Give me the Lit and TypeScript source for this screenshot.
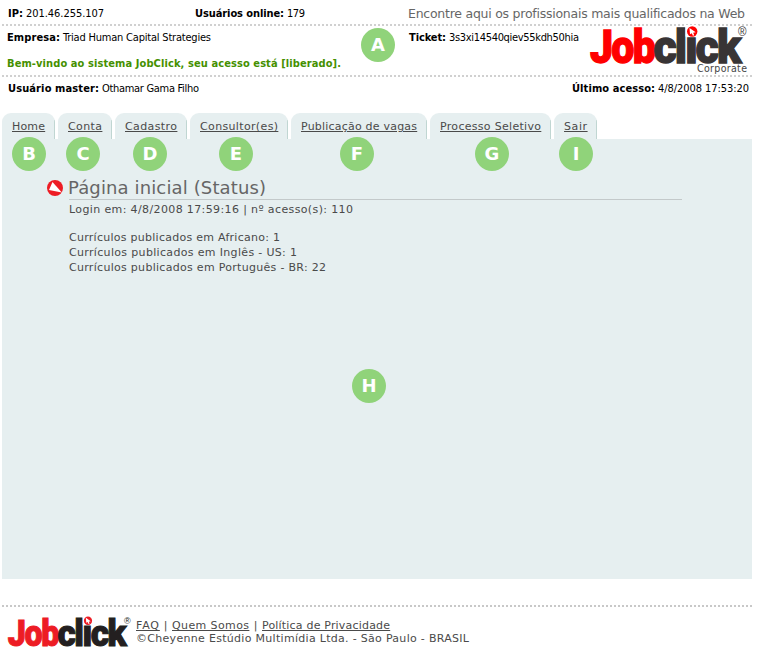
import { LitElement, html, css, svg } from "lit";
import { customElement, property } from "lit/decorators.js";

/** One line of text whose tracking is adjusted so that it spans `w` pixels. */
@customElement("fit-text")
class FitText extends LitElement {
  @property({ type: Number }) w = 0;
  static styles = css`
    :host { display: inline-block; white-space: nowrap; vertical-align: top; }
  `;
  render() {
    return html`<slot></slot>`;
  }
  firstUpdated() {
    const n = (this.textContent ?? "").length;
    const natural = this.getBoundingClientRect().width;
    const gap = (this.w - natural) / Math.max(1, n - 1);
    this.style.letterSpacing = `${gap}px`;
    this.style.marginRight = `${-gap}px`;
  }
}

@customElement("job-logo")
class JobLogo extends LitElement {
  @property() first = "#ff0000";
  @property() second = "#383435";
  static styles = css`
    :host { display: block; }
    svg { display: block; width: 100%; height: 100%; overflow: visible; }
    .word { font: 900 46px Roboto, sans-serif; letter-spacing: -2px; stroke-width: 1.3; }
    .reg { font: 12px "Liberation Sans", sans-serif; }
  `;
  render() {
    return html`<svg viewBox="0 0 158 38" preserveAspectRatio="none">
      ${svg`
        <text class="word" x="1" y="36" textLength="64" lengthAdjust="spacingAndGlyphs" fill=${this.first} stroke=${this.first}>Job</text>
        <text class="word" x="64.5" y="36" textLength="86" lengthAdjust="spacingAndGlyphs" fill=${this.second} stroke=${this.second}>click</text>
        <rect x="96.5" y="-2" width="13" height="11.6" fill="#fff"/>
        <circle cx="103.2" cy="4.5" r="5.2" fill=${this.first}/>
        <path d="M100.5 1 L106.7 5.2 L104.2 5.7 L105.2 8.2 L103.9 8.7 L102.8 6.2 L101 7.2Z" fill="#fff"/>
        <text class="reg" x="149" y="9" textLength="8.5" lengthAdjust="spacingAndGlyphs" fill=${this.second}>®</text>
      `}
    </svg>`;
  }
}

const tabs: [string, number][] = [
  ["Home", 33],
  ["Conta", 34],
  ["Cadastro", 52],
  ["Consultor(es)", 78],
  ["Publicação de vagas", 116],
  ["Processo Seletivo", 101],
  ["Sair", 23],
];

const marks: [string, number, number][] = [
  ["A", 378, 45],
  ["B", 29, 154],
  ["C", 83, 154],
  ["D", 150, 154],
  ["E", 236, 154],
  ["F", 357, 154],
  ["G", 492, 154],
  ["I", 576, 154],
  ["H", 369, 386],
];

@customElement("app-root")
class AppRoot extends LitElement {
  static styles = css`
    :host {
      display: block;
      position: relative;
      width: 760px;
      height: 656px;
      overflow: hidden;
      background: #fff;
      color: #4a4a4a;
      font: 11px/14px "DejaVu Sans", Verdana, sans-serif;
    }
    .page { width: 750px; margin-left: 2px; }
    .info {
      color: #000;
      font-family: "DejaVu Sans Condensed", "DejaVu Sans", Tahoma, sans-serif;
      font-stretch: condensed;
    }
    .row { display: flex; box-sizing: border-box; }
    .pair { display: flex; gap: 3px; }
    .dots {
      height: 2px;
      background: repeating-linear-gradient(90deg, #d0d0d0 0 2px, transparent 2px 4px);
    }
    .top { height: 24px; padding: 7px 7px 0 6px; }
    .online { margin-left: 91px; }
    .slogan {
      margin-left: auto;
      color: #666;
      font: 12.5px/14px "DejaVu Sans", Verdana, sans-serif;
    }
    .company { height: 49px; padding: 5px 5px 0 5px; }
    .who { width: 402px; }
    .welcome { margin-top: 12px; color: #459000; font-weight: bold; }
    .brand { margin-left: auto; width: 158px; margin-top: -4px; }
    .brand job-logo { width: 158px; height: 38px; }
    .corp {
      display: flex;
      justify-content: flex-end;
      margin-top: -3px;
      line-height: 12px;
      color: #444;
      font-family: "DejaVu Sans", Verdana, sans-serif;
      font-size: 10.5px;
    }
    .master { height: 36px; padding: 5px 3px 0 6px; justify-content: space-between; }
    .tabs { display: flex; gap: 3px; height: 26px; }
    .tab {
      box-sizing: border-box;
      padding: 7px 10px 0;
      background: linear-gradient(#c0d6d2, #c0d6d2) right 7px / 1px 100% no-repeat #e6eff0;
      border-radius: 9px 9px 0 0;
    }
    .link { text-decoration: underline; text-underline-offset: 1px; text-decoration-thickness: 1px; }
    .panel { box-sizing: border-box; height: 440px; padding: 38px 70px 0 45px; background: #e6eff0; }
    .head { display: flex; align-items: center; height: 22px; }
    .head svg { width: 16px; height: 16px; margin-right: 5px; }
    .title { font-size: 18px; line-height: 22px; color: #666; }
    .body { margin-left: 22px; border-top: 1px solid #c3c9ca; padding-top: 3px; }
    .list { margin-top: 13px; line-height: 15px; }
    .foot { margin-top: 26px; }
    .foot .dots { background: repeating-linear-gradient(90deg, #c8c8c8 0 2px, transparent 2px 4px); }
    .legal { display: flex; padding: 10px 0 0 5px; }
    .legal job-logo { width: 124px; height: 31px; margin-right: 5px; }
    .lines { line-height: 13px; padding-top: 2px; }
    .links { display: flex; }
    .sep { width: 13px; text-align: center; }
    .mark {
      position: absolute;
      width: 34px;
      height: 34px;
      border-radius: 50%;
      background: #90d37a;
      color: #fff;
      font: bold 18px/34px "DejaVu Sans", Verdana, sans-serif;
      text-align: center;
    }
  `;

  render() {
    return html`
      <div class="page">
        <div class="info">
          <div class="row top">
            <div class="pair"><b><fit-text w="15">IP:</fit-text></b><fit-text w="78">201.46.255.107</fit-text></div>
            <div class="pair online"><b><fit-text w="89">Usuários online:</fit-text></b><fit-text w="18">179</fit-text></div>
            <div class="slogan"><fit-text w="337">Encontre aqui os profissionais mais qualificados na Web</fit-text></div>
          </div>
          <div class="dots"></div>
          <div class="row company">
            <div class="who">
              <div class="pair"><b><fit-text w="53">Empresa:</fit-text></b><fit-text w="148">Triad Human Capital Strategies</fit-text></div>
              <div class="welcome"><fit-text w="334">Bem-vindo ao sistema JobClick, seu acesso está [liberado].</fit-text></div>
            </div>
            <div class="pair"><b><fit-text w="37">Ticket:</fit-text></b><fit-text w="130">3s3xi14540qiev55kdh50hia</fit-text></div>
            <div class="brand">
              <job-logo></job-logo>
              <div class="corp"><fit-text w="50">Corporate</fit-text></div>
            </div>
          </div>
          <div class="dots"></div>
          <div class="row master">
            <div class="pair"><b><fit-text w="91">Usuário master:</fit-text></b><fit-text w="97">Othamar Gama Filho</fit-text></div>
            <div class="pair"><b><fit-text w="83">Último acesso:</fit-text></b><fit-text w="91">4/8/2008 17:53:20</fit-text></div>
          </div>
        </div>
        <div class="tabs">
          ${tabs.map(([t, w]) => html`<div class="tab"><fit-text class="link" w=${w}>${t}</fit-text></div>`)}
        </div>
        <div class="panel">
          <div class="head">
            <svg viewBox="0 0 16 16">
              <circle cx="8" cy="8" r="8" fill="#ed1c24" />
              <path d="M5.5 2 L14.8 12.5 L2 10Z" fill="#fff" />
            </svg>
            <div class="title"><fit-text w="198">Página inicial (Status)</fit-text></div>
          </div>
          <div class="body">
            <fit-text w="284">Login em: 4/8/2008 17:59:16 | nº acesso(s): 110</fit-text>
            <div class="list">
              <div><fit-text w="211">Currículos publicados em Africano: 1</fit-text></div>
              <div><fit-text w="228">Currículos publicados em Inglês - US: 1</fit-text></div>
              <div><fit-text w="257">Currículos publicados em Português - BR: 22</fit-text></div>
            </div>
          </div>
        </div>
        <div class="foot">
          <div class="dots"></div>
          <div class="legal">
            <job-logo first="#ed1c24" second="#231f20"></job-logo>
            <div class="lines">
              <div class="links">
                <fit-text class="link" w="23">FAQ</fit-text><span class="sep">|</span>
                <fit-text class="link" w="77">Quem Somos</fit-text><span class="sep">|</span>
                <fit-text class="link" w="128">Política de Privacidade</fit-text>
              </div>
              <fit-text w="333">©Cheyenne Estúdio Multimídia Ltda. - São Paulo - BRASIL</fit-text>
            </div>
          </div>
        </div>
      </div>
      ${marks.map(([t, x, y]) => html`<div class="mark" style="left:${x - 17}px;top:${y - 17}px">${t}</div>`)}
    `;
  }
}
